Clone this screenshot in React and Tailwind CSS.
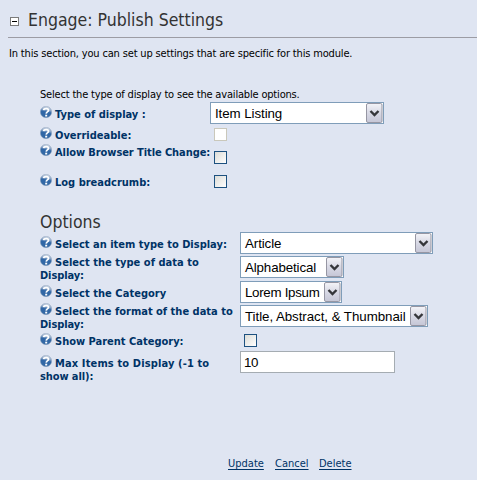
function HelpIcon() {
  return (
    <svg className="-mt-[2px] mr-[3px] h-3 w-3 shrink-0" viewBox="0 0 12 12">
      <defs>
        <linearGradient id="ball" x1="0.6" y1="0" x2="0.4" y2="1">
          <stop offset="0" stopColor="#d9e0ea" />
          <stop offset="0.3" stopColor="#8ba6c8" />
          <stop offset="0.5" stopColor="#2f66a6" />
          <stop offset="1" stopColor="#3469a5" />
        </linearGradient>
      </defs>
      <circle cx="6" cy="6" r="5.7" fill="url(#ball)" stroke="#8fa3bd" strokeWidth="0.5" />
      <path d="M3.6 4.2C3.9 2.2 8.7 2 8.5 4.4C8.4 5.9 6.3 5.9 6.2 7.6" fill="none" stroke="#fff" strokeWidth="1.8" />
      <rect x="5.2" y="8.7" width="2" height="1.8" fill="#fff" />
    </svg>
  );
}

function Label({ pad, lines }) {
  return (
    <div className={`font-['DejaVu_Sans_Condensed','DejaVu_Sans',sans-serif] text-[11px] leading-[13px] font-bold whitespace-nowrap text-[#003366] ${pad}`}>
      <div className="flex h-[13px] items-start">
        <HelpIcon />
        <span className={lines[0][1]}>{lines[0][0]}</span>
      </div>
      {lines[1] && <div className={lines[1][1]}>{lines[1][0]}</div>}
    </div>
  );
}

function Select({ children, className, text = "" }) {
  return (
    <div className={`flex h-[22px] border border-[#7f9db9] bg-white font-['Liberation_Sans',Arial,sans-serif] text-[13.33px] leading-[21px] whitespace-nowrap text-black ${className}`}>
      <span className={`min-w-0 flex-1 pl-1 ${text}`}>{children}</span>
      <svg className="h-5 w-[17px] shrink-0" viewBox="0 0 17 20">
        <defs>
          <linearGradient id="drop" x1="0" y1="0" x2="0" y2="1">
            <stop offset="0" stopColor="#f4f4f8" />
            <stop offset="0.5" stopColor="#d8d9e5" />
            <stop offset="1" stopColor="#c5c6d6" />
          </linearGradient>
        </defs>
        <rect x="0.5" y="0.5" width="15.5" height="19" rx="1.5" fill="url(#drop)" stroke="#9696a3" />
        <path d="M4.5 8L8.5 12L12.5 8" fill="none" stroke="#35363a" strokeWidth="2.4" />
      </svg>
    </div>
  );
}

function Check({ disabled }) {
  return (
    <div
      className={
        disabled
          ? "ml-1 h-[13px] w-[13px] border border-[#cac8bb] bg-white"
          : "ml-1 h-[13px] w-[13px] border border-[#1d5180] bg-linear-to-br from-[#dcdcd7] to-white"
      }
    />
  );
}

function Row({ className, pad, lines, controlPad = "", children }) {
  return (
    <div className={`grid ${className}`}>
      <Label pad={pad} lines={lines} />
      <div className={controlPad}>{children}</div>
    </div>
  );
}

export default function App() {
  return (
    <div className="h-[480px] w-[477px] overflow-hidden bg-[#dfe5f2] font-['DejaVu_Sans_Condensed','DejaVu_Sans',sans-serif] text-[11px] leading-[13px] whitespace-nowrap text-black">
      <header className="ml-2 flex h-[38px] border-b border-[#9c9ca4] pl-[2px]">
        <div className="mt-[17px] flex h-[9px] w-[9px] shrink-0 items-center justify-center border border-[#7b7b7b] bg-white">
          <div className="h-px w-[5px] bg-black" />
        </div>
        <h1 className="mt-[8px] ml-[9px] text-[17.5px] leading-6 text-[#333333]">Engage: Publish Settings</h1>
      </header>
      <p className="mt-[9px] ml-[9px] h-[13px] tracking-[-0.16px]">In this section, you can set up settings that are specific for this module.</p>

      <main className="ml-10">
        <p className="mt-[28px] h-[14px] tracking-[-0.18px]">Select the type of display to see the available options.</p>
        <Row className="h-6 grid-cols-[170px_auto]" pad="pt-[6px]" lines={[["Type of display :", ""]]}>
          <Select className="w-[174px]" text="tracking-[-0.08px]">Item Listing</Select>
        </Row>
        <Row className="h-[17px] grid-cols-[170px_auto]" pad="pt-[3px]" controlPad="pt-[2px]" lines={[["Overrideable:", ""]]}>
          <Check disabled />
        </Row>
        <Row className="h-[30px] grid-cols-[170px_auto]" pad="pt-[3px]" controlPad="pt-[8px]" lines={[["Allow Browser Title Change:", "tracking-[-0.08px]"]]}>
          <Check />
        </Row>
        <Row className="h-[37px] grid-cols-[170px_auto]" pad="pt-[3px]" controlPad="pt-[2px]" lines={[["Log breadcrumb:", ""]]}>
          <Check />
        </Row>

        <h2 className="h-[22px] text-[17.5px] leading-6 text-[#333333]">Options</h2>
        <Row className="h-6 grid-cols-[200px_auto]" pad="pt-[6px]" lines={[["Select an item type to Display:", ""]]}>
          <Select className="w-[193px]" text="tracking-[-0.1px]">Article</Select>
        </Row>
        <Row className="h-[25px] grid-cols-[200px_auto]" pad="" lines={[["Select the type of data to", "tracking-[0.03px]"], ["Display:", "tracking-[-0.1px]"]]}>
          <Select className="w-[104px]" text="tracking-[-0.13px]">Alphabetical</Select>
        </Row>
        <Row className="h-6 grid-cols-[200px_auto]" pad="pt-[6px]" lines={[["Select the Category", "tracking-[0.04px]"]]}>
          <Select className="w-[102px]" text="tracking-[-0.3px]">Lorem Ipsum</Select>
        </Row>
        <Row className="h-[26px] grid-cols-[200px_auto]" pad="" lines={[["Select the format of the data to", ""], ["Display:", "tracking-[-0.1px]"]]}>
          <Select className="w-[188px]" text="tracking-[-0.06px]">Title, Abstract, &amp; Thumbnail</Select>
        </Row>
        <Row className="h-5 grid-cols-[200px_auto]" pad="pt-[4px]" controlPad="pt-[3px]" lines={[["Show Parent Category:", ""]]}>
          <Check />
        </Row>
        <Row className="h-[106px] grid-cols-[200px_auto]" pad="pt-[6px]" lines={[["Max Items to Display (-1 to", "tracking-[0.13px]"], ["show all):", "tracking-[-0.1px]"]]}>
          <div className="h-[22px] w-[155px] border border-[#a5acb2] bg-white pl-[3px] font-['Liberation_Sans',Arial,sans-serif] text-[13.33px] leading-[21px] tracking-[-0.5px]">10</div>
        </Row>
      </main>

      <footer className="ml-[228px] flex text-[#003366]">
        <a className="w-[47px]"><span className="underline underline-offset-2">Update</span></a>
        <a className="w-11"><span className="underline underline-offset-2">Cancel</span></a>
        <a><span className="underline underline-offset-2">Delete</span></a>
      </footer>
    </div>
  );
}
